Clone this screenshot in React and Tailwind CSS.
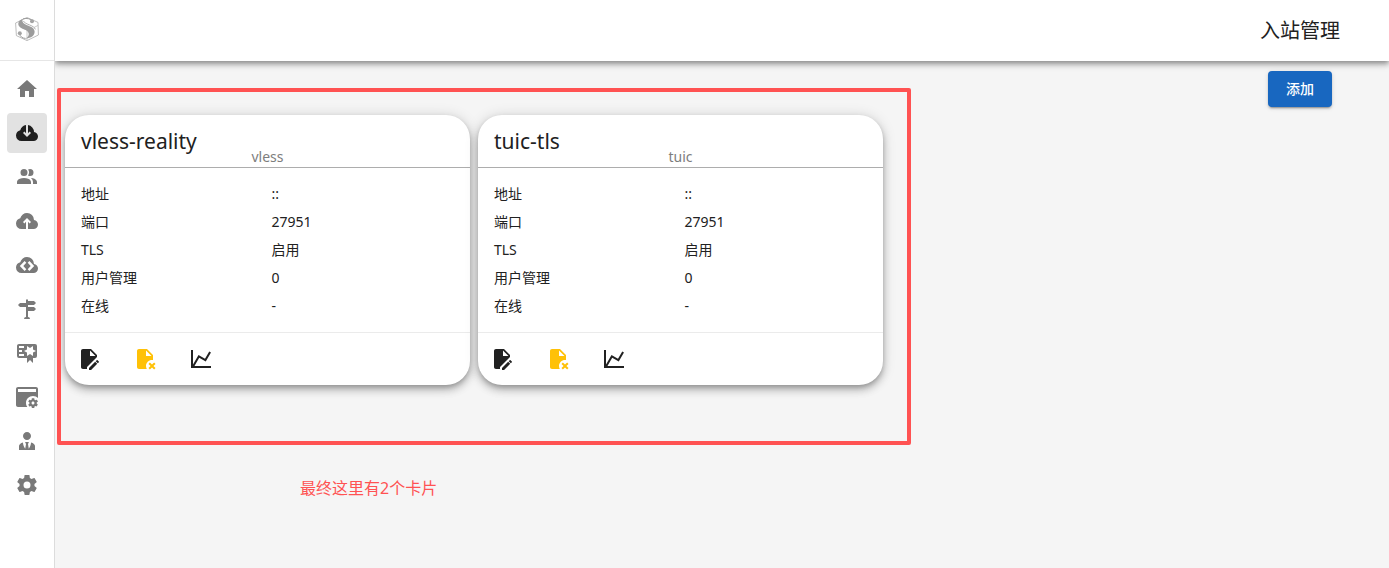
const icons = {
  home: "M10,20V14H14V20H19V12H22L12,3L2,12H5V20H10Z",
  inbound:
    "M6.5 20Q4.22 20 2.61 18.43 1 16.85 1 14.58 1 12.63 2.17 11.1 3.35 9.57 5.25 9.15 5.83 7.13 7.39 5.75 8.95 4.38 11 4.08V12.15L9.4 10.6L8 12L12 16L16 12L14.6 10.6L13 12.15V4.08Q15.58 4.43 17.29 6.39 19 8.35 19 11 20.73 11.2 21.86 12.5 23 13.78 23 15.5 23 17.38 21.69 18.69 20.38 20 18.5 20Z",
  users:
    "M16 17V19H2V17S2 13 9 13 16 17 16 17M12.5 7.5A3.5 3.5 0 1 0 9 11A3.5 3.5 0 0 0 12.5 7.5M15.94 13A5.32 5.32 0 0 1 18 17V19H22V17S22 13.37 15.94 13M15 4A3.39 3.39 0 0 0 13.07 4.59A5 5 0 0 1 13.07 10.41A3.39 3.39 0 0 0 15 11A3.5 3.5 0 0 0 15 4Z",
  outbound:
    "M11 20H6.5Q4.22 20 2.61 18.43 1 16.85 1 14.58 1 12.63 2.17 11.1 3.35 9.57 5.25 9.15 5.88 6.85 7.75 5.43 9.63 4 12 4 14.93 4 16.96 6.04 19 8.07 19 11 20.73 11.2 21.86 12.5 23 13.78 23 15.5 23 17.38 21.69 18.69 20.38 20 18.5 20H13V12.85L14.6 14.4L16 13L12 9L8 13L9.4 14.4L11 12.85Z",
  endpoints:
    "M6.5 20Q4.22 20 2.61 18.43 1 16.85 1 14.58 1 12.63 2.17 11.1 3.35 9.57 5.25 9.15 5.88 6.85 7.75 5.43 9.63 4 12 4 14.93 4 16.96 6.04 19 8.07 19 11 20.73 11.2 21.86 12.5 23 13.78 23 15.5 23 17.38 21.69 18.69 20.38 20 18.5 20ZM9.6 18L11.3 16.3L8.3 13L11.3 9.7L9.6 8L4.8 13ZM14.4 18L19.2 13L14.4 8L12.7 9.7L15.7 13L12.7 16.3Z",
  routes:
    "M11,10H5L3,8L5,6H11V3L12,2L13,3V4H19L21,6L19,8H13V10H19L21,12L19,14H13V20A2,2 0 0,1 15,22H9A2,2 0 0,1 11,20V10Z",
  tls: "M4,3C2.89,3 2,3.89 2,5V15A2,2 0 0,0 4,17H12V22L15,19L18,22V17H20A2,2 0 0,0 22,15V5A2,2 0 0,0 20,3H4M12,5L15,7L18,5V8.5L21,10L18,11.5V15L15,13L12,15V11.5L9,10L12,8.5V5M4,5H9V7H4V5M4,9H7V11H4V9M4,13H9V15H4V13Z",
  basics:
    "M21.7 18.6V17.6L22.8 16.8C22.9 16.7 23 16.6 22.9 16.5L21.9 14.8C21.9 14.7 21.7 14.7 21.6 14.7L20.4 15.2C20.1 15 19.8 14.8 19.5 14.7L19.3 13.4C19.3 13.3 19.2 13.2 19.1 13.2H17.1C16.9 13.2 16.8 13.3 16.8 13.4L16.6 14.7C16.3 14.9 16.1 15 15.8 15.2L14.6 14.7C14.5 14.7 14.4 14.7 14.3 14.8L13.3 16.5C13.3 16.6 13.3 16.7 13.4 16.8L14.5 17.6V18.6L13.4 19.4C13.3 19.5 13.2 19.6 13.3 19.7L14.3 21.4C14.4 21.5 14.5 21.5 14.6 21.5L15.8 21C16 21.2 16.3 21.4 16.6 21.5L16.8 22.8C16.9 22.9 17 23 17.1 23H19.1C19.2 23 19.3 22.9 19.3 22.8L19.5 21.5C19.8 21.3 20 21.2 20.3 21L21.5 21.4C21.6 21.4 21.7 21.4 21.8 21.3L22.8 19.6C22.9 19.5 22.9 19.4 22.8 19.4L21.7 18.6M18 19.5C17.2 19.5 16.5 18.8 16.5 18S17.2 16.5 18 16.5 19.5 17.2 19.5 18 18.8 19.5 18 19.5M12.3 22H3C1.9 22 1 21.1 1 20V4C1 2.9 1.9 2 3 2H21C22.1 2 23 2.9 23 4V13.1C21.8 11.8 20 11 18 11C14.1 11 11 14.1 11 18C11 19.5 11.5 20.9 12.3 22M3 4V7H21V4H3Z",
  admins:
    "M12 3C14.21 3 16 4.79 16 7S14.21 11 12 11 8 9.21 8 7 9.79 3 12 3M16 13.54C16 14.6 15.72 17.07 13.81 19.83L13 15L13.94 13.12C13.32 13.05 12.67 13 12 13S10.68 13.05 10.06 13.12L11 15L10.19 19.83C8.28 17.07 8 14.6 8 13.54C5.61 14.24 4 15.5 4 17V21H20V17C20 15.5 18.4 14.24 16 13.54Z",
  settings:
    "M12,15.5A3.5,3.5 0 0,1 8.5,12A3.5,3.5 0 0,1 12,8.5A3.5,3.5 0 0,1 15.5,12A3.5,3.5 0 0,1 12,15.5M19.43,12.97C19.47,12.65 19.5,12.33 19.5,12C19.5,11.67 19.47,11.34 19.43,11L21.54,9.37C21.73,9.22 21.78,8.95 21.66,8.73L19.66,5.27C19.54,5.05 19.27,4.96 19.05,5.05L16.56,6.05C16.04,5.66 15.5,5.32 14.87,5.07L14.5,2.42C14.46,2.18 14.25,2 14,2H10C9.75,2 9.54,2.18 9.5,2.42L9.13,5.07C8.5,5.32 7.96,5.66 7.44,6.05L4.95,5.05C4.73,4.96 4.46,5.05 4.34,5.27L2.34,8.73C2.21,8.95 2.27,9.22 2.46,9.37L4.57,11C4.53,11.34 4.5,11.67 4.5,12C4.5,12.33 4.53,12.65 4.57,12.97L2.46,14.63C2.27,14.78 2.21,15.05 2.34,15.27L4.34,18.73C4.46,18.95 4.73,19.03 4.95,18.95L7.44,17.94C7.96,18.34 8.5,18.68 9.13,18.93L9.5,21.58C9.54,21.82 9.75,22 10,22H14C14.25,22 14.46,21.82 14.5,21.58L14.87,18.93C15.5,18.67 16.04,18.34 16.56,17.94L19.05,18.95C19.27,19.03 19.54,18.95 19.66,18.73L21.66,15.27C21.78,15.05 21.73,14.78 21.54,14.63L19.43,12.97Z",
  edit: "M6 2C4.89 2 4 2.9 4 4V20C4 21.11 4.89 22 6 22H10V20.09L20 10.09V8L14 2H6M13 3.5L18.5 9H13V3.5M20.15 13C20 13 19.86 13.05 19.75 13.16L18.73 14.18L20.82 16.26L21.84 15.25C22.05 15.03 22.05 14.67 21.84 14.46L20.54 13.16C20.43 13.05 20.29 13 20.15 13M18.14 14.77L12 20.92V23H14.08L20.23 16.85L18.14 14.77Z",
  remove:
    "M14 2H6C4.89 2 4 2.89 4 4V20C4 21.11 4.89 22 6 22H13.81C13.28 21.09 13 20.05 13 19C13 15.69 15.69 13 19 13C19.34 13 19.67 13.03 20 13.08V8L14 2M13 9V3.5L18.5 9H13M22.54 16.88L20.41 19L22.54 21.12L21.12 22.54L19 20.41L16.88 22.54L15.47 21.12L17.59 19L15.47 16.88L16.88 15.47L19 17.59L21.12 15.47L22.54 16.88Z",
  chart:
    "M16,11.78L20.24,4.45L21.97,5.45L16.74,14.5L10.23,10.75L5.46,19H22V21H2V3H4V17.54L9.5,8L16,11.78Z",
};

const navItems = [
  { icon: "home", label: "主页" },
  { icon: "inbound", label: "入站管理", active: true },
  { icon: "users", label: "用户管理" },
  { icon: "outbound", label: "出站管理" },
  { icon: "endpoints", label: "端点管理" },
  { icon: "routes", label: "路由管理" },
  { icon: "tls", label: "TLS 设置" },
  { icon: "basics", label: "基础信息" },
  { icon: "admins", label: "管理员" },
  { icon: "settings", label: "设置" },
];

const inbounds = [
  { tag: "vless-reality", type: "vless", address: "::", port: 27951, tls: "启用", users: 0, online: "-" },
  { tag: "tuic-tls", type: "tuic", address: "::", port: 27951, tls: "启用", users: 0, online: "-" },
];

function Icon({ name }) {
  return (
    <svg className="size-6 shrink-0" viewBox="0 0 24 24" fill="currentColor" fillRule="evenodd" aria-hidden="true">
      <path d={icons[name]} />
    </svg>
  );
}

function Logo() {
  return (
    <svg className="size-6" viewBox="0 0 24 24" fill="none" aria-hidden="true">
      {/* cube */}
      <path d="M12 .5L23 5.4L23.4 18L12 23.6L1.4 18.6L.6 6Z" stroke="#adadad" strokeWidth=".8" />
      <path d="M12 13V23.6M19 10.5L23 8.4M12 13L8 11" stroke="#bdbdbd" strokeWidth=".8" />
      {/* ribbon */}
      <path
        d="M8 1.8C3.4 3.4 1.8 7.4 5 10.2C8 12.6 12.6 12.6 13.6 16C14.2 18.4 13 20.2 10.6 21.4C15.6 21.6 19.8 18.8 19.6 14.6C19.2 10 14.4 9.6 10.6 7.6C7.4 5.8 6.6 3.8 8 1.8Z"
        fill="#9c9c9c"
      />
      <path d="M8 1.8C12 .8 15.8 1.8 17.6 4.2M10.6 21.4C7.4 21.4 5.2 19.6 4.6 16.8" stroke="#9c9c9c" strokeWidth="1" />
      <path d="M8.4 4C10 7.6 19 8 20.4 12.4" stroke="#7d7d7d" strokeWidth=".6" />
      <circle cx="17" cy="4.2" r="2" fill="#a3a3a3" />
      <circle cx="4.8" cy="16.2" r="2" fill="#a3a3a3" />
    </svg>
  );
}

function Sidebar() {
  return (
    <aside className="relative z-10 w-[55px] shrink-0 bg-white border-r border-[#dcdcdc]">
      <div className="h-[61px] flex items-center justify-center pb-0.5 border-b border-[#e6e6e6]">
        <Logo />
      </div>
      <nav className="flex flex-col gap-1 px-[7px] pt-2">
        {navItems.map((item) => (
          <a
            key={item.icon}
            href={`#${item.icon}`}
            aria-label={item.label}
            className={
              item.active
                ? "h-10 flex items-center justify-center rounded bg-[#e2e2e2] text-[#1f1f1f]"
                : "h-10 flex items-center justify-center rounded text-[#797979]"
            }
          >
            <Icon name={item.icon} />
          </a>
        ))}
      </nav>
    </aside>
  );
}

function Row({ label, value }) {
  return (
    <div className="grid grid-cols-2 gap-2 leading-7">
      <dt>{label}</dt>
      <dd>{value}</dd>
    </div>
  );
}

function InboundCard({ inbound }) {
  return (
    <article className="bg-white rounded-3xl text-sm shadow-[0_3px_5px_-1px_rgba(0,0,0,0.2),0_5px_8px_0_rgba(0,0,0,0.2),0_1px_14px_0_rgba(0,0,0,0.15)]">
      <header className="h-[53px] grid grid-cols-[1fr_auto_1fr] px-4 border-b border-[#adadad]">
        <h2 className="pt-[10px] text-[21px] leading-8 whitespace-nowrap">{inbound.tag}</h2>
        <span className="self-end text-[#7d7d7d]">{inbound.type}</span>
      </header>
      <dl className="px-4 py-3">
        <Row label="地址" value={inbound.address} />
        <Row label="端口" value={inbound.port} />
        <Row label="TLS" value={inbound.tls} />
        <Row label="用户管理" value={inbound.users} />
        <Row label="在线" value={inbound.online} />
      </dl>
      <footer className="h-[53px] flex items-center gap-8 px-3 border-t border-[#ebebeb]">
        <button type="button" aria-label="编辑">
          <Icon name="edit" />
        </button>
        <button type="button" aria-label="删除" className="text-[#ffc107]">
          <Icon name="remove" />
        </button>
        <button type="button" aria-label="图表">
          <Icon name="chart" />
        </button>
      </footer>
    </article>
  );
}

export default function App() {
  return (
    <div className="min-h-screen flex bg-[#f5f5f5] text-[#212121] font-['Noto_Sans','Noto_Sans_CJK_SC',sans-serif]">
      <Sidebar />
      <div className="flex-1 min-w-0">
        <header className="h-[61px] flex items-center justify-end pr-[49px] bg-white shadow-[0_2px_4px_-1px_rgba(0,0,0,0.2),0_4px_5px_0_rgba(0,0,0,0.2),0_1px_10px_0_rgba(0,0,0,0.2)]">
          <h1 className="text-xl">入站管理</h1>
        </header>

        <main className="relative pt-[10px]">
          <div className="flex justify-end pr-[57px]">
            <button
              type="button"
              className="h-9 w-16 rounded bg-[#1867c0] text-white text-sm font-medium shadow-[0_3px_1px_-2px_rgba(0,0,0,0.2),0_2px_2px_0_rgba(0,0,0,0.14),0_1px_5px_0_rgba(0,0,0,0.12)]"
            >
              添加
            </button>
          </div>

          <div className="grid grid-cols-3 gap-2 mt-2 pl-[10px] pr-[93px]">
            {inbounds.map((inbound) => (
              <InboundCard key={inbound.tag} inbound={inbound} />
            ))}
          </div>

          {/* Annotation over the cards */}
          <div className="absolute left-[2px] top-[27px] w-[854px] h-[357px] border-4 border-[#ff5252] rounded-xs pointer-events-none" />
          <p className="absolute left-[245px] top-[415px] text-base text-[#ff5252]">最终这里有2个卡片</p>
        </main>
      </div>
    </div>
  );
}
